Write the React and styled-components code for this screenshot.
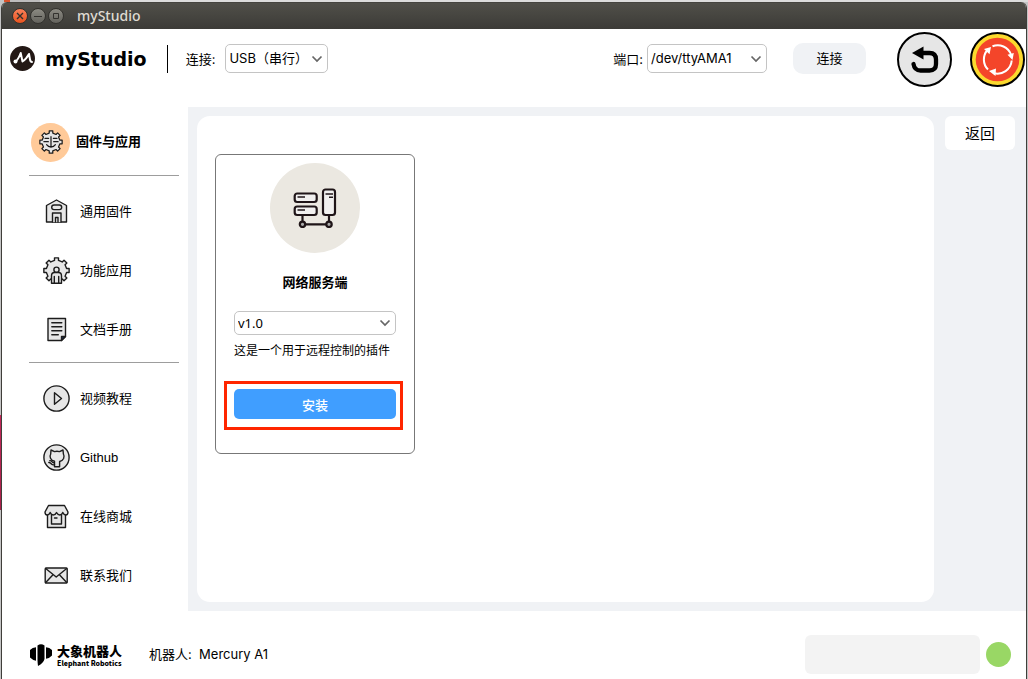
import React from "react";
import styled, { createGlobalStyle } from "styled-components";

const ui = '"Inter", "Noto Sans CJK SC", sans-serif';
const menuFont = '"Liberation Sans", "Noto Sans CJK SC", sans-serif';

const Global = createGlobalStyle`
  * { box-sizing: border-box; }
  html, body, #root { height: 100%; }
  body {
    margin: 0;
    overflow: hidden;
    font: 13px/20px ${ui};
    color: #000;
    background: #c4c4c4;
  }
  button, select { font: inherit; color: inherit; border: 0; margin: 0; cursor: pointer; }
  svg { display: block; flex: none; }
`;

const Desktop = styled.div`
  height: 100%;
  padding: 2px 1px 0;
  background:
    linear-gradient(90deg, transparent 4px, #d9532c 4px, #d9532c 10px, #bdbdbd 10px, #bdbdbd 40px, #dcdcdc 40px) top / 100% 2px no-repeat,
    linear-gradient(transparent 415px, #c2285a 415px, #a8204a 510px, transparent 510px) left / 2px 100% no-repeat;
`;
const Window = styled.div`
  height: 100%;
  display: flex;
  flex-direction: column;
  border: 1px solid #3f3e3a;
  border-width: 0 1px;
  border-radius: 6px 6px 0 0;
  overflow: hidden;
  background: #fff;
`;
const TitleBar = styled.div`
  flex: none;
  height: 27px;
  display: flex;
  align-items: center;
  gap: 2px;
  padding-left: 10px;
  background: linear-gradient(#504f49, #3c3b37);
  border-top: 1px solid #45443f;
  color: #dfdbd2;
  font: 500 14px/20px "Noto Sans", sans-serif;
`;
const WindowButton = styled.button`
  width: 16px;
  height: 16px;
  padding: 0;
  border-radius: 50%;
  display: grid;
  place-items: center;
  color: #33322e;
  border: 1px solid #33322e;
  background: ${(p) => (p.$close ? "linear-gradient(#f9805a, #e9541f)" : "linear-gradient(#8b8a82, #64635d)")};
`;
const WindowTitle = styled.span`
  margin-left: 11px;
`;

const Header = styled.header`
  flex: none;
  height: 78px;
  padding: 3px 1px 20px 8px;
  display: flex;
  align-items: center;
`;
const Controls = styled.div`
  flex: 1;
  display: flex;
  align-items: center;
  padding-bottom: 2px;
`;
const Brand = styled.h1`
  margin: 0 20px 0 10px;
  font: bold 19px/24px "DejaVu Sans", sans-serif;
`;
const Rule = styled.div`
  width: 1px;
  height: 28px;
  background: #000;
  margin-right: 18px;
`;
const Field = styled.div`
  display: flex;
  align-items: center;
  gap: ${(p) => p.$gap}px;
  margin-left: ${(p) => (p.$end ? "auto" : 0)};
`;
const SelectBox = styled.span`
  display: grid;
  align-items: center;
  width: ${(p) => p.$width};
  & > * { grid-area: 1 / 1; }
  & > svg { justify-self: end; margin-right: 5px; pointer-events: none; }
`;
const Select = styled.select`
  appearance: none;
  width: 100%;
  height: ${(p) => p.$height}px;
  padding: 0 20px 1px 3px;
  border: 1px solid #c4c4c4;
  border-radius: 5px;
  background: #fff;
  font-family: ${(p) => p.$family || ui};
`;
const ConnectButton = styled.button`
  width: 73px;
  height: 31px;
  padding: 0 0 2px;
  margin: 0 31px 0 26px;
  border-radius: 10px;
  background: #f0f2f5;
`;
const RoundButton = styled.button`
  width: 55px;
  height: 55px;
  padding: 0;
  background: none;
  & + & { margin-left: 18px; }
`;

const Body = styled.div`
  flex: 1;
  display: grid;
  grid-template-columns: 186px minmax(0, 1fr);
`;
const Sidebar = styled.nav`
  padding: 0 9px 0 27px;
  font-family: ${menuFont};
`;
const MenuHead = styled.a`
  display: flex;
  align-items: center;
  gap: 6px;
  height: 69px;
  padding: 2px 0 0 2px;
  font-weight: bold;
  color: inherit;
  text-decoration: none;
  border-bottom: 1px solid #9d9d9d;
`;
const Badge = styled.span`
  width: 39px;
  height: 39px;
  border-radius: 50%;
  display: grid;
  place-items: center;
  background: #ffca99;
`;
const Menu = styled.div`
  padding: 6px 0 3px;
  & + & { border-top: 1px solid #9d9d9d; }
`;
const MenuLink = styled.a`
  display: flex;
  align-items: center;
  gap: 10px;
  height: 59px;
  padding-left: 14px;
  color: inherit;
  text-decoration: none;
`;

const Main = styled.main`
  display: flex;
  gap: 11px;
  align-items: flex-start;
  padding: 9px 11px 9px 9px;
  background: #f0f2f5;
`;
const Panel = styled.section`
  flex: 1;
  align-self: stretch;
  padding: 38px 18px;
  border-radius: 13px;
  background: #fff;
`;
const BackButton = styled.button`
  width: 70px;
  height: 34px;
  padding: 2px 0 0;
  border-radius: 6px;
  background: #fff;
  font-size: 15px;
`;
const Card = styled.article`
  width: 200px;
  height: 300px;
  padding: 8px 18px;
  display: flex;
  flex-direction: column;
  align-items: center;
  border: 1px solid #777;
  border-radius: 6px;
`;
const CardPicture = styled.div`
  width: 90px;
  height: 90px;
  border-radius: 50%;
  display: grid;
  place-items: center;
  background: #ebe8e1;
`;
const CardTitle = styled.h2`
  margin: 20px 0 18px;
  font: bold 13px/20px ${menuFont};
`;
const CardText = styled.p`
  align-self: stretch;
  margin: 6px 0 28px;
  font-size: 12px;
  white-space: nowrap;
`;
const InstallArea = styled.div`
  position: relative;
  align-self: stretch;
`;
const InstallButton = styled.button`
  width: 100%;
  height: 30px;
  padding: 2px 0 0;
  border-radius: 5px;
  background: #409eff;
  color: #fff;
  font-weight: 500;
`;
const Highlight = styled.div`
  position: absolute;
  inset: -8px -7px -11px -10px;
  border: 3px solid #ff2600;
  pointer-events: none;
`;

const Footer = styled.footer`
  flex: none;
  height: 68px;
  display: flex;
  align-items: center;
  padding: 0 15px 0 28px;
`;
const FooterRow = styled.div`
  flex: 1;
  display: flex;
  align-items: center;
  padding-top: 19px;
`;
const Company = styled.div`
  display: flex;
  align-items: center;
  gap: 5px;
  width: 93px;
  margin-right: 26px;
  white-space: nowrap;
`;
const CompanyName = styled.div`
  font: 900 13px/17px "Noto Sans CJK SC", sans-serif;
`;
const CompanyLatin = styled.div`
  font: 900 7px/8px "Noto Sans CJK SC", sans-serif;
`;
const Robot = styled.span`
  padding-bottom: 2px;
`;
const StatusBox = styled.output`
  width: 175px;
  height: 39px;
  margin: 0 6px 0 auto;
  border-radius: 6px;
  background: #f3f3f3;
`;
const StatusLight = styled.span`
  width: 25px;
  height: 25px;
  border-radius: 50%;
  background: #99d765;
`;

const Chevron = () => (
  <svg width="12" height="8" viewBox="0 0 12 8" fill="none" stroke="#666" strokeWidth="1.7">
    <path d="M1.500 1.500 6 6l4.500-4.500" />
  </svg>
);

const gearPath = (teeth, rOut, rIn, c) => {
  const pts = [];
  for (let i = 0; i < teeth; i++) {
    const a = (i / teeth) * Math.PI * 2 - Math.PI / 2;
    const s = Math.PI / teeth;
    [[-0.5, rIn], [-0.4, rOut], [0.4, rOut], [0.5, rIn]].forEach(([k, r]) => {
      pts.push(`${(c + r * Math.cos(a + k * s)).toFixed(2)} ${(c + r * Math.sin(a + k * s)).toFixed(2)}`);
    });
  }
  return `M${pts.join("L")}Z`;
};

const Icon = ({ size = 27, children }) => (
  <svg width={size} height={size} viewBox="0 0 27 27" fill="#e6e6e6" stroke="#1c1c1c" strokeWidth="1.400" strokeLinejoin="round" strokeLinecap="round">
    {children}
  </svg>
);

const FirmwareGear = () => (
  <Icon size={24}>
    <path d={gearPath(8, 12.700, 10.200, 13.500)} />
    <path d="M6.800 9.500h4M5.500 13.200h5M16.200 9.500h4M16.500 13.200h5M13.500 7.500v11M8.500 16.500q2 2.700 5 2.700t5-2.700" fill="none" />
  </Icon>
);
const HouseIcon = () => (
  <Icon>
    <path d="M3.500 7.500 13.500 2l10 5.500v16.500H3.500Z" />
    <rect x="8.700" y="7" width="10" height="4.600" rx="2.300" />
    <path d="M9.500 24v-9h8.500v9M12.500 24v-4.500h2.500V24" />
  </Icon>
);
const AppGear = () => (
  <Icon>
    <path d={gearPath(8, 12.800, 10.300, 13.500)} />
    <path d="M8.500 26.300V19q0-3.500 3-3.500h4q3 0 3 3.500v7.300Z" />
    <circle cx="13.500" cy="12.700" r="2.600" />
    <path d="M11.300 19.500v6.800M15.700 19.500v6.800" fill="none" />
  </Icon>
);
const DocIcon = () => (
  <Icon>
    <path d="M5 2.500h17.500v18l-4 4H5Z" />
    <path d="M18.500 20.500h4L18.500 24.500Z" fill="#17315f" />
    <path d="M8.800 6.800h10M8.800 10.800h10M8.800 14.800h10M8.800 18.800h6.500" fill="none" />
  </Icon>
);
const PlayIcon = () => (
  <Icon>
    <circle cx="13.500" cy="13.500" r="12.600" />
    <path d="M11.500 7.700 18.500 13.500l-7 5.700Z" />
  </Icon>
);
const GithubIcon = () => (
  <Icon>
    <circle cx="13.500" cy="13.500" r="12.600" />
    <path d="M8 6l3.500 1.600q2.500-.6 5 0L20 6l.4 4q1.200 2 .2 4.500-1.200 2.500-4 3v5.300h-5.100v-5.500q-3-.6-4-3-1-2.300.2-4.300Z" />
    <path d="M11.500 20.700q-2 .5-3-.7-1-1.500-2.700-1.500M11 18.700q-1.500 0-2.200-1.200-.8-1-2-.8" fill="none" />
  </Icon>
);
const ShopIcon = () => (
  <Icon>
    <path d="M4.500 11v13.500h18V11" />
    <path d="M8.500 11v10h10V11M11.500 15h2.500" />
    <path d="M5.500 2.500h16l3.500 6.500q0 3-2.200 3-2 0-3-2.500-1 2.500-3 2.500t-3.300-2.500q-1 2.500-3.300 2.500-2 0-3-2.500-1 2.500-3 2.500Q2 12 2 9Z" />
  </Icon>
);
const MailIcon = () => (
  <Icon>
    <rect x="2.200" y="6" width="22" height="15" rx="1" />
    <path d="m2.700 6.500 10.500 8.500L23.700 6.500M2.700 20.500l7.300-7.800M23.700 20.500l-7.300-7.800" fill="none" />
  </Icon>
);

const BrandMark = () => (
  <svg width="25" height="25" viewBox="0 0 25 25">
    <circle cx="12.500" cy="12.500" r="12.500" fill="#231815" />
    <path d="M5.500 15.500Q8 14 10.700 7l1.800 8.500q3.500-2 6.500-7.500l1 5.500q.5 2.500 2 2.500" fill="none" stroke="#fff" strokeWidth="2" strokeLinecap="round" strokeLinejoin="round" />
    <circle cx="5.500" cy="15.500" r="2" fill="#fff" />
  </svg>
);
const UndoIcon = () => (
  <svg width="55" height="55" viewBox="0 0 55 55">
    <circle cx="27.500" cy="27.500" r="26.500" fill="#e6e6e6" stroke="#000" strokeWidth="2" />
    <path d="M25 21h7.500q6.500 0 6.500 6.500v4.500q0 6.500-6.500 6.500h-9q-6 0-7-6.500" fill="none" stroke="#000" strokeWidth="4.300" strokeLinecap="round" />
    <path d="m15 21 11.500-6.500v13Z" />
  </svg>
);
const StopIcon = () => (
  <svg width="55" height="55" viewBox="0 0 55 55">
    <circle cx="27.500" cy="27.500" r="26.500" fill="#fbd92e" stroke="#000" strokeWidth="2" />
    <circle cx="27.500" cy="27.500" r="21.800" fill="#f4452a" />
    <g fill="none" stroke="#fff" strokeWidth="2">
      <path d="M22.500 14.300A14.200 14.200 0 0 1 41 22.500" />
      <path d="M41.700 28.500A14.200 14.200 0 0 1 23.500 41" />
      <path d="M18 37.500A14.200 14.200 0 0 1 17.500 18" />
    </g>
    <path d="m37.500 22.800 6.300-1.800-1.300 7ZM26 36.500l-7 2.500 6.500 5ZM14 17l7-2-1.500 7.300Z" fill="#fff" />
  </svg>
);
const ServerPicture = () => (
  <svg width="44" height="40" viewBox="0 0 44 40" fill="#f1f0ef" stroke="#1f1518" strokeWidth="2.200">
    <path d="M9.500 27v6M36 27v6M12 36.300h21" fill="none" />
    <rect x="1.700" y="5.500" width="22" height="8.500" rx="2.500" />
    <rect x="1.700" y="18.500" width="22" height="8.500" rx="2.500" />
    <rect x="30" y="1.500" width="12" height="25.500" rx="2.500" />
    <path d="M4.500 9h7.500M4.500 22h7.500M32.500 6h7.500M36 9.300h4" strokeWidth="1.500" />
    <circle cx="9.500" cy="36.300" r="2.700" fill="#aaa" />
    <circle cx="36" cy="36.300" r="2.700" fill="#aaa" />
  </svg>
);
const ElephantMark = () => (
  <svg width="22" height="22" viewBox="0 0 22 22">
    <path d="M7.500 1.500q3.500-2.500 7 0v13.500q-1 4-6.500 7-.5-4-.5-6ZM0 6q2.500-2.500 6-2.700v13.500Q2.500 16 0 13.500ZM22 6q-2.500-2.500-6-2.700v11.500q3.500-.5 6-3.300Z" />
  </svg>
);

const firmwareMenu = [
  ["通用固件", HouseIcon],
  ["功能应用", AppGear],
  ["文档手册", DocIcon],
];
const linkMenu = [
  ["视频教程", PlayIcon],
  ["Github", GithubIcon],
  ["在线商城", ShopIcon],
  ["联系我们", MailIcon],
];

const MenuGroup = ({ items }) => (
  <Menu>
    {items.map(([label, Glyph]) => (
      <MenuLink key={label} href="#">
        <Glyph />
        {label}
      </MenuLink>
    ))}
  </Menu>
);

export default function App() {
  return (
    <Desktop>
      <Global />
      <Window>
        <TitleBar>
          <WindowButton $close aria-label="关闭">
            <svg width="8" height="8" viewBox="0 0 8 8" stroke="currentColor" strokeWidth="1.400"><path d="m1 1 6 6M7 1 1 7" /></svg>
          </WindowButton>
          <WindowButton aria-label="最小化">
            <svg width="8" height="8" viewBox="0 0 8 8" stroke="currentColor"><path d="M0 4.500h8" /></svg>
          </WindowButton>
          <WindowButton aria-label="最大化">
            <svg width="8" height="8" viewBox="0 0 8 8" fill="none" stroke="currentColor"><path d="M1.500 1.500h5v5h-5Z" /></svg>
          </WindowButton>
          <WindowTitle>myStudio</WindowTitle>
        </TitleBar>
        <Header>
          <Controls>
            <BrandMark />
            <Brand>myStudio</Brand>
            <Rule />
            <Field $gap={10}>
              <label htmlFor="link">连接:</label>
              <SelectBox $width="103px">
                <Select id="link" $height={29}><option>USB（串行）</option></Select>
                <Chevron />
              </SelectBox>
            </Field>
            <Field $gap={4} $end>
              <label htmlFor="port">端口:</label>
              <SelectBox $width="120px">
                <Select id="port" $height={29}><option>/dev/ttyAMA1</option></Select>
                <Chevron />
              </SelectBox>
            </Field>
            <ConnectButton>连接</ConnectButton>
          </Controls>
          <RoundButton aria-label="撤销"><UndoIcon /></RoundButton>
          <RoundButton aria-label="急停"><StopIcon /></RoundButton>
        </Header>
        <Body>
          <Sidebar>
            <MenuHead href="#">
              <Badge><FirmwareGear /></Badge>
              固件与应用
            </MenuHead>
            <MenuGroup items={firmwareMenu} />
            <MenuGroup items={linkMenu} />
          </Sidebar>
          <Main>
            <Panel>
              <Card>
                <CardPicture><ServerPicture /></CardPicture>
                <CardTitle>网络服务端</CardTitle>
                <SelectBox $width="100%">
                  <Select $height={24} $family={'"Noto Sans", sans-serif'} aria-label="版本"><option>v1.0</option></Select>
                  <Chevron />
                </SelectBox>
                <CardText>这是一个用于远程控制的插件</CardText>
                <InstallArea>
                  <InstallButton>安装</InstallButton>
                  <Highlight />
                </InstallArea>
              </Card>
            </Panel>
            <BackButton>返回</BackButton>
          </Main>
        </Body>
        <Footer>
          <FooterRow>
            <Company>
              <ElephantMark />
              <div>
                <CompanyName>大象机器人</CompanyName>
                <CompanyLatin>Elephant Robotics</CompanyLatin>
              </div>
            </Company>
            <Robot>机器人:&nbsp; Mercury A1</Robot>
            <StatusBox />
            <StatusLight />
          </FooterRow>
        </Footer>
      </Window>
    </Desktop>
  );
}
